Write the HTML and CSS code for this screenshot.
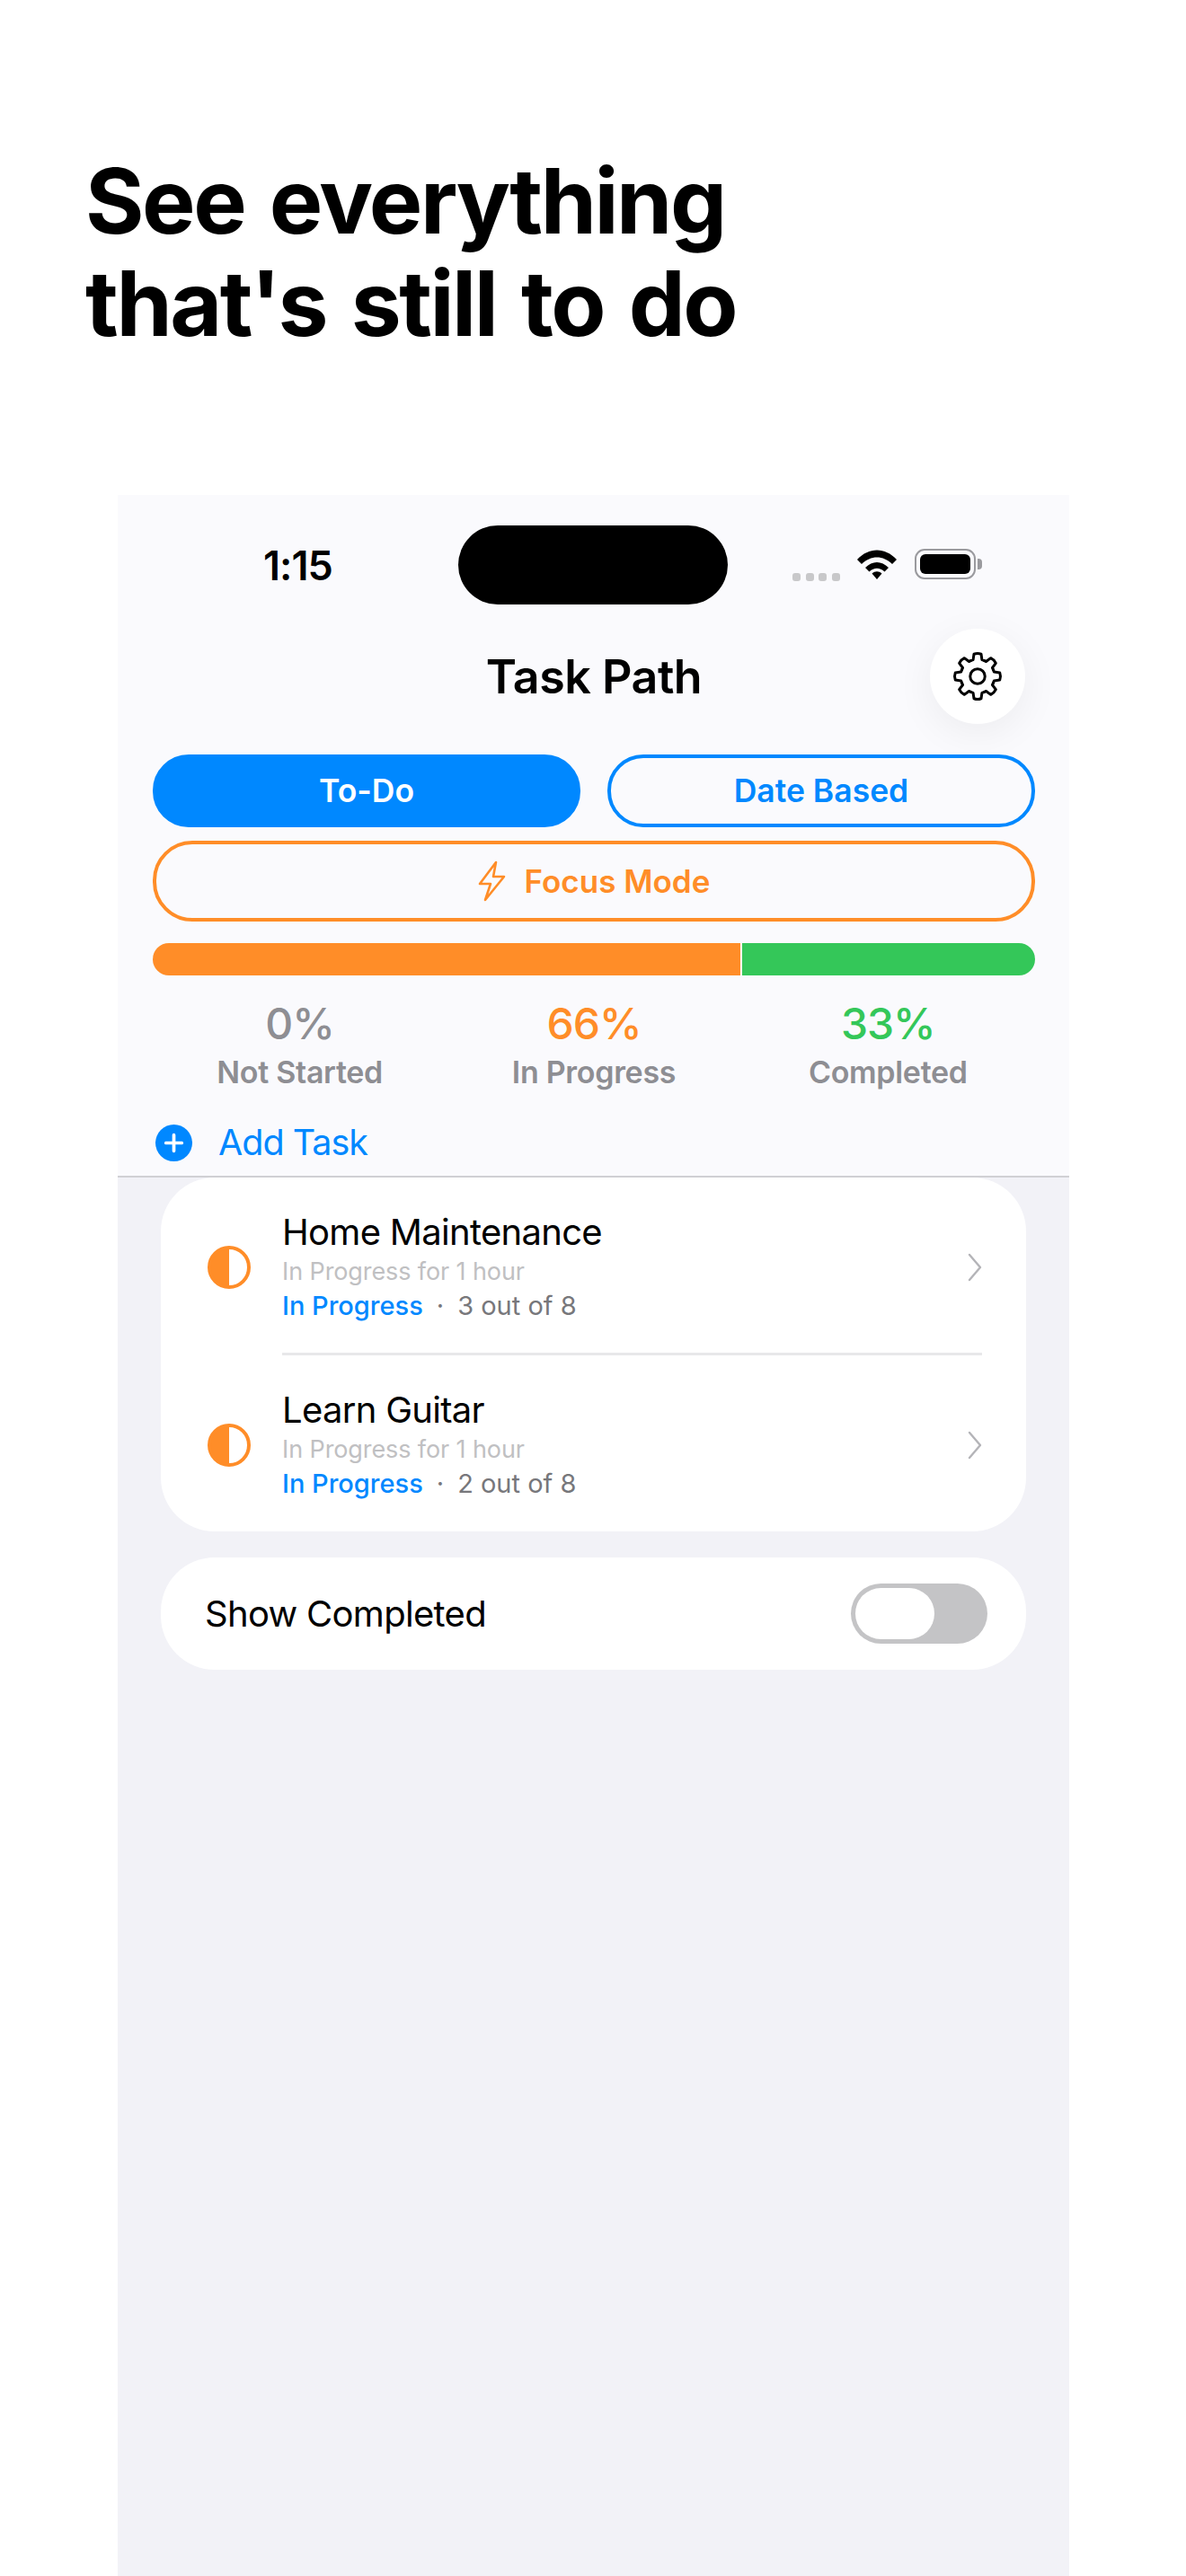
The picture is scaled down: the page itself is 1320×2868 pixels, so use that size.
FILE: index.html
```html
<!DOCTYPE html>
<html>
<head>
  <title>Task Path</title>
  <link rel="stylesheet" href="styles.css">
</head>
<body>
  <h1 class="headline">See everything<br>that's still to do</h1>

  <div class="screen">
    <div class="top">
      <!-- status bar -->
      <div class="status">
        <span class="time">1:15</span>
        <div class="island"></div>
        <div class="status-icons">
          <div class="dots"><i></i><i></i><i></i><i></i></div>
          <svg class="wifi" width="46" height="34" viewBox="0 0 46 34">
            <path d="M1 11C14 -3 32 -3 45 11L40 16C30 6 16 6 6 16Z"/>
            <path d="M10 20C18 12 28 12 36 20L31.5 24.5C26 19.5 20 19.5 14.5 24.5Z"/>
            <path d="M17.5 26.5C21 23.5 25 23.5 28.5 26.5L23 33Z"/>
          </svg>
          <div class="battery"><div class="battery-fill"></div></div>
          <div class="battery-cap"></div>
        </div>
      </div>

      <!-- title -->
      <div class="nav">
        <h2 class="nav-title">Task Path</h2>
        <div class="gear-btn">
          <svg width="60" height="60" viewBox="0 0 24 24" fill="none" stroke="#000" stroke-width="1.2" stroke-linejoin="round" stroke-linecap="round">
            <defs>
              <path id="tooth" d="M9.09 4.98L10.03 4.66L10.4 2.1Q12 1.5 13.6 2.1L13.97 4.66L14.91 4.98"/>
            </defs>
            <use href="#tooth"/>
            <use href="#tooth" transform="rotate(45 12 12)"/>
            <use href="#tooth" transform="rotate(90 12 12)"/>
            <use href="#tooth" transform="rotate(135 12 12)"/>
            <use href="#tooth" transform="rotate(180 12 12)"/>
            <use href="#tooth" transform="rotate(225 12 12)"/>
            <use href="#tooth" transform="rotate(270 12 12)"/>
            <use href="#tooth" transform="rotate(315 12 12)"/>
            <circle cx="12" cy="12" r="3.3"/>
          </svg>
        </div>
      </div>

      <!-- tabs -->
      <div class="tabs">
        <div class="tab tab-active">To-Do</div>
        <div class="tab">Date Based</div>
      </div>
      <div class="focus">
        <svg width="32" height="46" viewBox="0 0 32 46" fill="none" stroke="#ff8d28" stroke-width="2.6" stroke-linejoin="round">
          <path d="M20 2L2 26H14L8 44L29 18H17Z"/>
        </svg>
        <span>Focus Mode</span>
      </div>

      <!-- progress -->
      <div class="bar">
        <div class="bar-orange"></div>
        <div class="bar-green"></div>
      </div>
      <div class="stats">
        <div class="stat stat-gray"><div class="pct">0%</div><div class="lbl">Not Started</div></div>
        <div class="stat stat-orange"><div class="pct">66%</div><div class="lbl">In Progress</div></div>
        <div class="stat stat-green"><div class="pct">33%</div><div class="lbl">Completed</div></div>
      </div>

      <div class="add">
        <svg width="41" height="41" viewBox="0 0 42 42">
          <circle cx="21" cy="21" r="21" fill="#0088ff"/>
          <path d="M21 12V30M12 21H30" stroke="#fff" stroke-width="3.8" stroke-linecap="round"/>
        </svg>
        <span>Add Task</span>
      </div>
    </div>

    <div class="list">
      <div class="card tasks">
        <div class="row">
          <div class="half"></div>
          <div class="row-text">
            <div class="row-title">Home Maintenance</div>
            <div class="row-sub">In Progress for 1 hour</div>
            <div class="row-meta"><span class="blue">In Progress</span><span class="sep">·</span><span>3 out of 8</span></div>
          </div>
          <svg class="chev" width="18" height="32" viewBox="0 0 18 32" fill="none" stroke="#b4b4b8" stroke-width="2.4" stroke-linecap="round" stroke-linejoin="round"><path d="M3 2L15 16L3 30"/></svg>
        </div>
        <div class="divider"></div>
        <div class="row">
          <div class="half"></div>
          <div class="row-text">
            <div class="row-title">Learn Guitar</div>
            <div class="row-sub">In Progress for 1 hour</div>
            <div class="row-meta"><span class="blue">In Progress</span><span class="sep">·</span><span>2 out of 8</span></div>
          </div>
          <svg class="chev" width="18" height="32" viewBox="0 0 18 32" fill="none" stroke="#b4b4b8" stroke-width="2.4" stroke-linecap="round" stroke-linejoin="round"><path d="M3 2L15 16L3 30"/></svg>
        </div>
      </div>

      <div class="card toggle-card">
        <span>Show Completed</span>
        <div class="toggle"><div class="knob"></div></div>
      </div>
    </div>
  </div>
</body>
</html>
```

FILE: styles.css
```css
* {
  box-sizing: border-box;
}

body {
  margin: 0;
  height: 2868px;
  overflow: hidden;
  background: #fff;
  font-family: Inter, "Liberation Sans", sans-serif;
  color: #000;
}

.headline {
  margin: 0;
  padding: 167px 0 0 95px;
  height: 551px;
  font-size: 100px;
  line-height: 114px;
  font-weight: 700;
  letter-spacing: -2.46px;
  word-spacing: 6.4px;
}

.screen {
  margin-left: 131px;
  width: 1059px;
  height: 2317px;
  background: #f2f2f7;
}

.top {
  height: 760px;
  padding: 34px 38px 0 39px;
  background: #fafafd;
  border-bottom: 2px solid #d0d0d4;
}

/* status bar */
.status {
  display: flex;
  align-items: center;
  height: 88px;
}

.time {
  width: 340px;
  padding-left: 123px;
  font-size: 45px;
  font-weight: 600;
  letter-spacing: -1px;
}

.island {
  width: 300px;
  height: 88px;
  border-radius: 44px;
  background: #000;
}

.status-icons {
  display: flex;
  align-items: flex-start;
  margin-left: 72px;
}

.dots {
  display: flex;
  gap: 5.5px;
  margin-top: 27px;
  margin-right: 18px;
}

.dots i {
  width: 9px;
  height: 9px;
  border-radius: 3px;
  background: #c8c8ca;
}

.wifi {
  margin-top: 1px;
  margin-right: 19px;
  fill: #000;
}

.battery {
  width: 68px;
  height: 34px;
  padding: 4px;
  border: 2px solid #9a9a9e;
  border-radius: 11px;
}

.battery-fill {
  height: 100%;
  border-radius: 6px;
  background: #000;
}

.battery-cap {
  width: 5px;
  height: 12px;
  margin: 11px 0 0 2px;
  border-radius: 0 4px 4px 0;
  background: #9a9a9e;
}

/* title */
.nav {
  position: relative;
  height: 106px;
  margin-top: 27px;
  display: flex;
  align-items: center;
  justify-content: center;
}

.nav-title {
  margin: 0;
  font-size: 52px;
  font-weight: 600;
  letter-spacing: -0.5px;
}

.gear-btn {
  position: absolute;
  right: 11px;
  top: 0;
  width: 106px;
  height: 106px;
  border-radius: 50%;
  background: #fff;
  box-shadow: 0 10px 44px rgba(0, 0, 0, 0.06);
  display: flex;
  align-items: center;
  justify-content: center;
}

/* tabs */
.tabs {
  display: flex;
  gap: 30px;
  margin-top: 34px;
}

.tab {
  flex: 1;
  height: 81px;
  border: 4px solid #0088ff;
  border-radius: 40px;
  color: #0088ff;
  font-size: 35.5px;
  font-weight: 600;
  display: flex;
  align-items: center;
  justify-content: center;
}

.tab-active {
  background: #0088ff;
  color: #fff;
}

.focus {
  height: 90px;
  margin-top: 15px;
  border: 4px solid #ff8d28;
  border-radius: 44px;
  color: #ff8d28;
  font-size: 35px;
  font-weight: 600;
  display: flex;
  align-items: center;
  justify-content: center;
  gap: 20px;
}

.bar {
  display: flex;
  height: 36px;
  margin-top: 24px;
  border-radius: 18px;
  overflow: hidden;
}

.bar-orange {
  width: 656px;
  background: #ff8d28;
  border-right: 2px solid #fff;
}

.bar-green {
  flex: 1;
  background: #34c759;
}

.stats {
  display: grid;
  grid-template-columns: repeat(3, 1fr);
  margin-top: 26px;
  text-align: center;
}

.pct {
  font-size: 48px;
  line-height: 56px;
  font-weight: 500;
  letter-spacing: -1px;
}

.lbl {
  margin-top: 3px;
  font-size: 34px;
  line-height: 46px;
  font-weight: 600;
  letter-spacing: -0.3px;
  color: #8e8e93;
}

.stat-gray .pct {
  color: #8e8e93;
}

.stat-orange .pct {
  color: #ff8d28;
}

.stat-green .pct {
  color: #34c759;
}

.add {
  display: flex;
  align-items: center;
  gap: 29px;
  margin-top: 31px;
  padding-left: 3px;
  color: #0088ff;
  font-size: 39.5px;
  letter-spacing: -1px;
}

/* list */
.list {
  padding: 0 48px;
}

.card {
  background: #fff;
  border-radius: 60px;
}

.tasks {
  padding-bottom: 1px;
}

.row {
  display: flex;
  align-items: center;
  height: 195px;
  padding: 4px 48px 0 52px;
}

.half {
  width: 48px;
  height: 48px;
  flex-shrink: 0;
  border: 4px solid #ff8d28;
  border-radius: 50%;
  background: linear-gradient(90deg, #ff8d28 50%, #fff 50%);
}

.row-text {
  flex: 1;
  margin-left: 35px;
}

.row-title {
  font-size: 40px;
  line-height: 50px;
  letter-spacing: -0.7px;
}

.row-sub {
  margin-top: 1px;
  font-size: 27px;
  line-height: 36px;
  letter-spacing: -0.1px;
  color: #c0c0c2;
}

.row-meta {
  font-size: 29px;
  line-height: 40px;
  color: #77777b;
}

.blue {
  color: #0088ff;
  font-weight: 500;
}

.sep {
  margin: 0 15px;
}

.divider {
  height: 3px;
  margin: 0 49px 0 135px;
  background: #e8e8ea;
}

.toggle-card {
  display: flex;
  align-items: center;
  justify-content: space-between;
  height: 125px;
  margin-top: 29px;
  padding: 0 43px 0 49px;
  font-size: 40px;
  letter-spacing: -0.7px;
}

.toggle {
  width: 152px;
  height: 67px;
  padding: 5px;
  border-radius: 34px;
  background: #c4c4c6;
}

.knob {
  width: 88px;
  height: 57px;
  border-radius: 29px;
  background: #fff;
}
```
